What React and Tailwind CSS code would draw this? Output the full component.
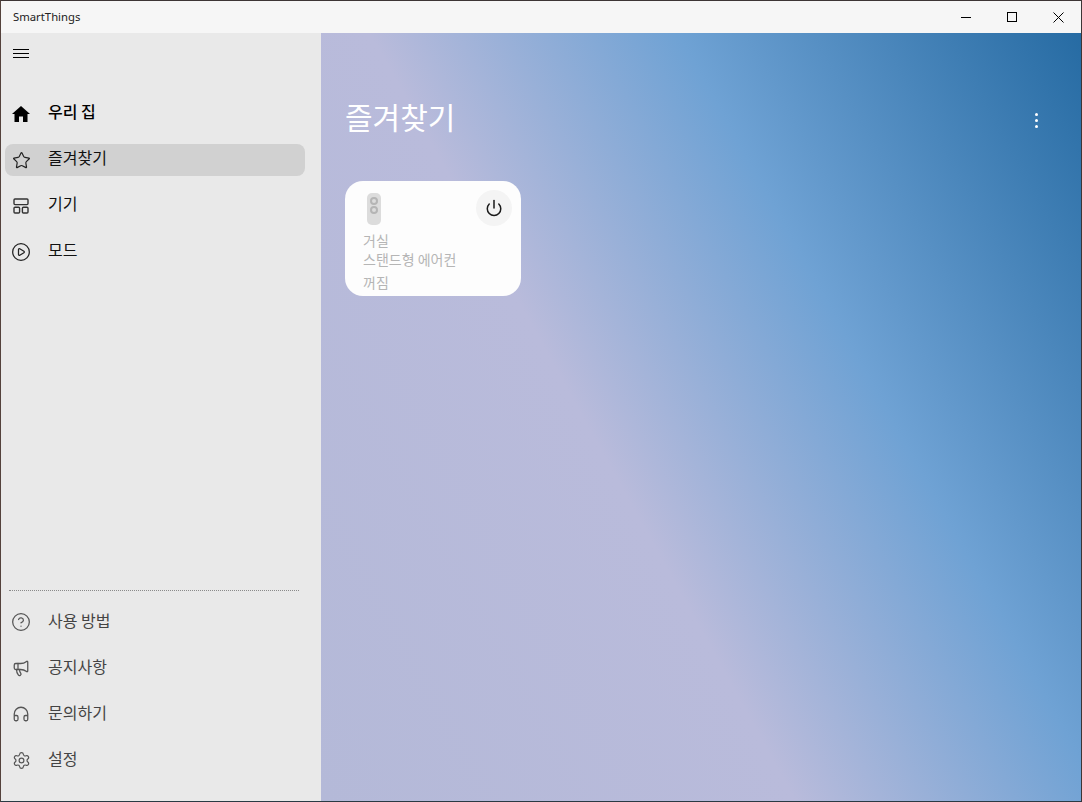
import { Star, CirclePlay, CircleHelp, Megaphone, Headphones, Settings, Power } from 'lucide-react'

const font = { fontFamily: '"Noto Sans CJK KR", "Noto Sans", sans-serif' }

function HomeIcon() {
  return (
    <svg width="18" height="16" viewBox="0 0 18 16" fill="#000">
      <path d="M9 0 L18 8 L15.5 8 L15.5 16 L11 16 L11 10.5 L7 10.5 L7 16 L2.5 16 L2.5 8 L0 8 Z" />
    </svg>
  )
}

function DevicesIcon() {
  return (
    <svg width="16" height="16" viewBox="0 0 16 16" fill="none" stroke="#333" strokeWidth="1.4">
      <rect x="1" y="1" width="14" height="5.6" rx="1" />
      <rect x="1" y="9.2" width="5.6" height="5.8" rx="1" />
      <rect x="9.4" y="9.2" width="5.6" height="5.8" rx="1" />
    </svg>
  )
}

function NavItem({ icon, label, active, bold, muted }) {
  return (
    <div className={`flex h-[32px] items-center rounded-lg pl-[4px] ${active ? 'bg-[#d1d1d1]' : ''}`}>
      <span className="flex w-[24px] items-center justify-center">{icon}</span>
      <span
        className={`ml-[15px] text-[16px] leading-none ${bold ? 'mb-[6px] font-medium text-black' : muted ? 'mb-[4px] text-[#444]' : 'mb-[6px] text-[#111]'}`}
      >
        {label}
      </span>
    </div>
  )
}

export default function App() {
  return (
    <div className="flex h-[802px] w-[1082px] flex-col overflow-hidden border-t border-l border-r border-b border-t-[#3d3535] border-l-[#54423c] border-r-[#3d3535] border-b-[#2a3a44]" style={font}>
      <div className="flex h-[32px] shrink-0 items-center justify-between bg-[#f6f6f6]">
        <span className="pl-[12px] text-[11.3px] text-[#222]" style={{ fontFamily: '"Noto Sans", sans-serif' }}>SmartThings</span>
        <div className="flex items-center">
          <div className="flex h-[32px] w-[46px] items-center justify-center">
            <div className="h-px w-[10px] bg-black" />
          </div>
          <div className="flex h-[32px] w-[46px] items-center justify-center">
            <div className="h-[10px] w-[10px] border border-black" />
          </div>
          <div className="flex h-[32px] w-[46px] items-center justify-center">
            <svg width="11" height="11" viewBox="0 0 11 11" stroke="#000" strokeWidth="1"><path d="M0.5 0.5 L10.5 10.5 M10.5 0.5 L0.5 10.5" /></svg>
          </div>
        </div>
      </div>

      <div className="flex min-h-0 flex-1">
        <aside className="flex w-[320px] shrink-0 flex-col bg-[#e9e9e9] pl-[4px] pr-[16px]">
          <div className="flex h-[40px] items-center pl-[8px]">
            <div className="flex w-[16px] flex-col gap-[3px]">
              <div className="h-px bg-black" />
              <div className="h-px bg-black" />
              <div className="h-px bg-black" />
            </div>
          </div>
          <div className="mt-[25px] flex flex-col gap-[14px]">
            <NavItem icon={<HomeIcon />} label="우리 집" bold />
            <NavItem icon={<Star size={19} strokeWidth={1.5} color="#222" />} label="즐겨찾기" active />
            <NavItem icon={<DevicesIcon />} label="기기" />
            <NavItem icon={<CirclePlay size={20} strokeWidth={1.5} color="#222" />} label="모드" />
          </div>
          <div className="mt-auto ml-[4px] mr-[6px] border-t border-dotted border-[#8a8a8a]" />
          <div className="mt-[15px] mb-[25px] flex flex-col gap-[14px]">
            <NavItem icon={<CircleHelp size={20} strokeWidth={1.5} color="#555" />} label="사용 방법" muted />
            <NavItem icon={<Megaphone size={18} strokeWidth={1.7} color="#555" />} label="공지사항" muted />
            <NavItem icon={<Headphones size={18} strokeWidth={1.7} color="#555" />} label="문의하기" muted />
            <NavItem icon={<Settings size={19} strokeWidth={1.5} color="#555" />} label="설정" muted />
          </div>
        </aside>

        <main className="flex-1 bg-[linear-gradient(61deg,#b4b9d8_0%,#b9bbdb_40%,#6fa2d4_66%,#266ba3_100%)] pl-[24px] pr-[43px]">
          <div className="flex items-start justify-between pt-[61px]">
            <h1 className="text-[30px] leading-[44px] font-normal text-white">즐겨찾기</h1>
            <div className="mt-[19px] flex flex-col gap-[3px]">
              <div className="h-[3px] w-[3px] rounded-full bg-white" />
              <div className="h-[3px] w-[3px] rounded-full bg-white" />
              <div className="h-[3px] w-[3px] rounded-full bg-white" />
            </div>
          </div>
          <div className="mt-[43px] h-[115px] w-[176px] rounded-[18px] bg-[#fdfdfd] pl-[18px] pr-[9px] pt-[9px]">
            <div className="flex items-start justify-between">
              <div className="mt-[3px] ml-[4px] flex h-[32px] w-[14px] flex-col items-center gap-[1px] rounded-[5px] bg-[#dcdcdc] pt-[4px]">
                <div className="h-[8px] w-[8px] rounded-full border-2 border-[#b5b5b5]" />
                <div className="h-[8px] w-[8px] rounded-full border-2 border-[#b5b5b5]" />
              </div>
              <div className="flex h-[36px] w-[36px] items-center justify-center rounded-full bg-[#f4f4f4]">
                <Power size={18} strokeWidth={2} color="#1a1a1a" />
              </div>
            </div>
            <div className="mt-[5px] text-[14px] leading-[19px] text-[#b5b5b5]">거실</div>
            <div className="text-[14px] leading-[19px] text-[#b5b5b5]">스탠드형 에어컨</div>
            <div className="mt-[4px] text-[14px] leading-[19px] text-[#b5b5b5]">꺼짐</div>
          </div>
        </main>
      </div>
    </div>
  )
}
